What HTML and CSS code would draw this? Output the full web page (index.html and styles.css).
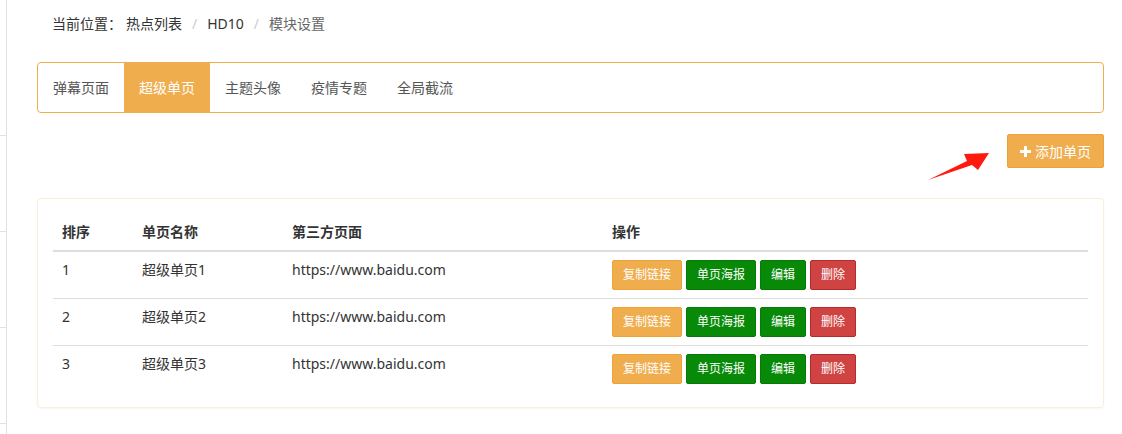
FILE: index.html
```
<!DOCTYPE html>
<html lang="zh-CN">
<head>
    <meta charset="UTF-8">
    <title>模块设置</title>
    <link rel="stylesheet" href="styles.css">
</head>
<body>
    <div class="layout">
        <!-- 左侧菜单（被截掉的部分） -->
        <aside class="side">
            <div class="side-item first"></div>
            <div class="side-item"></div>
            <div class="side-item"></div>
            <div class="side-item"></div>
        </aside>

        <main class="content">
            <div class="breadcrumb">
                <span class="crumb-label">当前位置：</span>
                <a class="crumb" href="#">热点列表</a>
                <span class="sep">/</span>
                <a class="crumb" href="#">HD10</a>
                <span class="sep">/</span>
                <span class="crumb current">模块设置</span>
            </div>

            <ul class="tabs">
                <li class="tab">弹幕页面</li>
                <li class="tab active">超级单页</li>
                <li class="tab">主题头像</li>
                <li class="tab">疫情专题</li>
                <li class="tab">全局截流</li>
            </ul>

            <div class="toolbar">
                <!-- 标注箭头 -->
                <svg class="arrow" width="66" height="34" viewBox="0 0 66 34">
                    <polygon points="3,32 42,13 39,6 64,5 53,22 47,17" fill="#ff1a0f"/>
                </svg>
                <button class="btn btn-warning btn-add">
                    <svg class="plus" width="11" height="11" viewBox="0 0 11 11">
                        <rect x="4" y="0" width="3" height="11" fill="#fff"/>
                        <rect x="0" y="4" width="11" height="3" fill="#fff"/>
                    </svg>
                    添加单页
                </button>
            </div>

            <div class="panel">
                <table class="table">
                    <thead>
                        <tr>
                            <th class="col-sort">排序</th>
                            <th class="col-name">单页名称</th>
                            <th class="col-url">第三方页面</th>
                            <th>操作</th>
                        </tr>
                    </thead>
                    <tbody>
                        <tr>
                            <td>1</td>
                            <td>超级单页1</td>
                            <td>https://www.baidu.com</td>
                            <td>
                                <div class="ops">
                                    <button class="btn btn-sm btn-warning">复制链接</button>
                                    <button class="btn btn-sm btn-green">单页海报</button>
                                    <button class="btn btn-sm btn-green">编辑</button>
                                    <button class="btn btn-sm btn-danger">删除</button>
                                </div>
                            </td>
                        </tr>
                        <tr>
                            <td>2</td>
                            <td>超级单页2</td>
                            <td>https://www.baidu.com</td>
                            <td>
                                <div class="ops">
                                    <button class="btn btn-sm btn-warning">复制链接</button>
                                    <button class="btn btn-sm btn-green">单页海报</button>
                                    <button class="btn btn-sm btn-green">编辑</button>
                                    <button class="btn btn-sm btn-danger">删除</button>
                                </div>
                            </td>
                        </tr>
                        <tr>
                            <td>3</td>
                            <td>超级单页3</td>
                            <td>https://www.baidu.com</td>
                            <td>
                                <div class="ops">
                                    <button class="btn btn-sm btn-warning">复制链接</button>
                                    <button class="btn btn-sm btn-green">单页海报</button>
                                    <button class="btn btn-sm btn-green">编辑</button>
                                    <button class="btn btn-sm btn-danger">删除</button>
                                </div>
                            </td>
                        </tr>
                    </tbody>
                </table>
            </div>
        </main>
    </div>
</body>
</html>
```

FILE: styles.css
```
body {
    margin: 0;
    padding: 0;
    background-color: #ffffff;
    color: #333333;
    font-family: "Noto Sans", "Noto Sans CJK SC", sans-serif;
    font-size: 14px;
    line-height: 20px;
}

.layout {
    display: flex;
    min-height: 434px;
}

/* 左侧菜单 */
.side {
    width: 6px;
    border-right: 1px solid #e3e3e3;
    display: flex;
    flex-direction: column;
}

.side-item {
    height: 95px;
    border-bottom: 1px solid #e3e3e3;
}

.side-item.first {
    height: 135px;
}

.content {
    flex: 1;
    padding: 0 18px 0 30px;
}

/* 面包屑 */
.breadcrumb {
    padding: 14px 15px 0;
    display: flex;
    align-items: center;
}

.crumb-label {
    color: #333333;
    margin-right: 4px;
}

.crumb {
    color: #333333;
    text-decoration: none;
}

.crumb.current {
    color: #666666;
}

.sep {
    color: #cccccc;
    padding: 0 10px;
}

/* 选项卡 */
.tabs {
    list-style: none;
    margin: 28px 0 0;
    padding: 0;
    display: flex;
    border: 1px solid #f0ad4e;
    border-radius: 4px;
    height: 49px;
}

.tab {
    padding: 0 15px;
    line-height: 49px;
    color: #555555;
    cursor: pointer;
}

.tab.active {
    background-color: #f0ad4e;
    color: #ffffff;
}

/* 按钮 */
.toolbar {
    position: relative;
    display: flex;
    justify-content: flex-end;
    margin-top: 21px;
}

.arrow {
    position: absolute;
    top: 14px;
    right: 113px;
}

.btn {
    font-family: inherit;
    border: 1px solid transparent;
    border-radius: 2px;
    color: #ffffff;
    cursor: pointer;
}

.btn-add {
    height: 34px;
    width: 97px;
    padding: 0 12px;
    font-size: 14px;
    display: flex;
    align-items: center;
    justify-content: center;
    gap: 4px;
}

.btn-warning {
    background-color: #f0ad4e;
    border-color: #eea236;
}

.btn-green {
    background-color: #088a08;
    border-color: #067a06;
}

.btn-danger {
    background-color: #cf4343;
    border-color: #b52b2b;
}

.btn-sm {
    font-size: 12px;
    line-height: 18px;
    padding: 5px 10px;
    min-width: 46px;
}

/* 列表面板 */
.panel {
    margin-top: 30px;
    border: 1px solid #faefd6;
    border-radius: 4px;
    padding: 15px;
    box-shadow: 0 1px 2px rgba(0, 0, 0, 0.04);
}

.table {
    width: 100%;
    border-collapse: collapse;
}

.table th {
    text-align: left;
    font-weight: bold;
    padding: 8px 9px;
    border-bottom: 2px solid #dddddd;
}

.table td {
    padding: 8px 9px;
    vertical-align: top;
}

.table tbody tr + tr td {
    border-top: 1px solid #dddddd;
}

.col-sort {
    width: 62px;
}

.col-name {
    width: 132px;
}

.col-url {
    width: 302px;
}

.ops {
    display: flex;
    gap: 4px;
}
```
